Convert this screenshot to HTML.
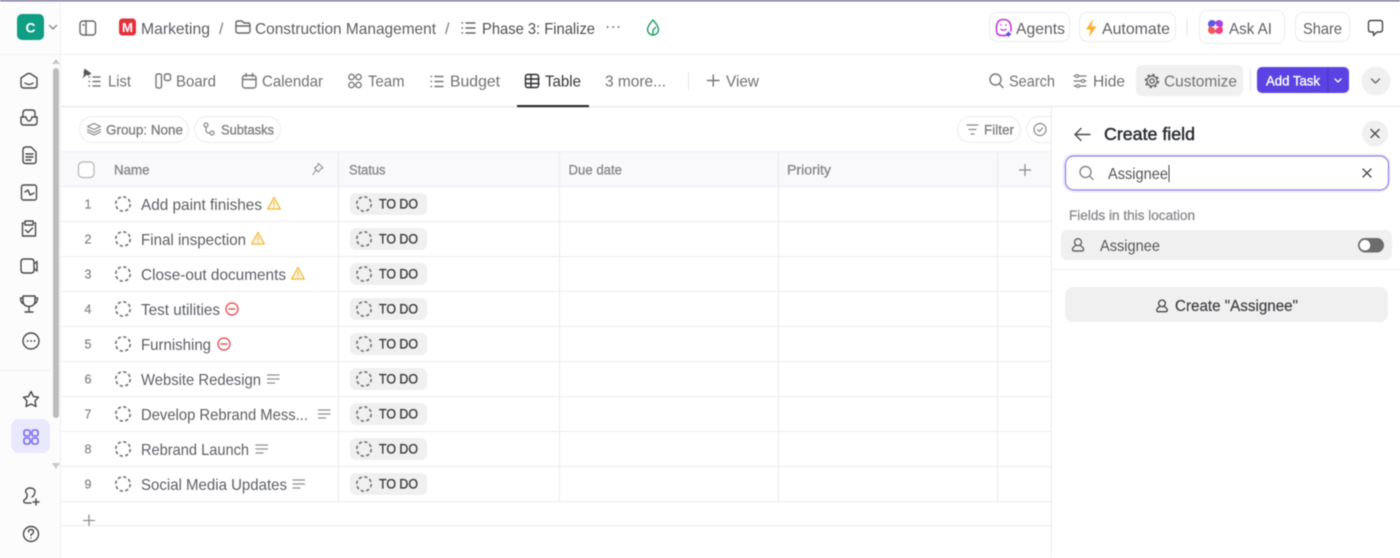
<!DOCTYPE html>
<html lang="en"><head><meta charset="utf-8"><title>Table</title>
<style>
html,body{margin:0;padding:0;background:#fff;width:1400px;height:558px;overflow:hidden}
svg{display:block;filter:blur(.45px)}
text{font-family:"Liberation Sans",sans-serif;font-size:16px;fill:#717171}
.t{fill:#5d5f64;font-size:16px}
.h{fill:#85868a;stroke:#85868a;stroke-width:.3px;font-size:13.5px}
.s{fill:#3a3b3e;stroke:#3a3b3e;stroke-width:.35px;font-size:13.5px}
.n{fill:#8a8a8a;stroke:#8a8a8a;stroke-width:.3px;font-size:12.5px}
.c{fill:#7d7d7d;stroke:#7d7d7d;stroke-width:.3px;font-size:13.5px}
.i{fill:none;stroke:#666;stroke-width:1.4;stroke-linecap:round;stroke-linejoin:round}
.d{fill:none;stroke:#4a4a4d;stroke-width:1.4;stroke-linecap:round;stroke-linejoin:round}
.chip{fill:#fff;stroke:#ececec}
.g{stroke:#ededed;stroke-width:1}
</style></head><body>
<svg width="1400" height="558" viewBox="0 0 1400 558" xmlns="http://www.w3.org/2000/svg">
<defs>
<g id="dash"><circle r="7.2" fill="none" stroke="#777" stroke-width="1.7" stroke-dasharray="3.3 2.35"/></g>
<g id="warn"><path d="M0-6.500L6.300 5H-6.300Z" fill="#fff8e8" stroke="#f5c04f" stroke-width="1.400" stroke-linejoin="round"/><path d="M0-2.500V1.200M0 3.200V3.400" stroke="#f5c04f" stroke-width="1.300" stroke-linecap="round"/></g>
<g id="stop"><circle r="6" fill="none" stroke="#e8575b" stroke-width="1.400"/><path d="M-3 0H3" stroke="#e8575b" stroke-width="1.400" stroke-linecap="round"/></g>
<g id="lines"><path d="M0-4H11.500M0 0H11.500M0 4H7" stroke="#8f8f8f" stroke-width="1.300" stroke-linecap="round"/></g>
<g id="pill"><rect x="350" y="-11" width="77" height="22" rx="6" fill="#f0f0f0"/><use href="#dash" x="364"/><text x="379" y="4.700" class="s" textLength="39" lengthAdjust="spacingAndGlyphs">TO DO</text></g>
<g id="user"><circle cx="0" cy="-2.800" r="3.500" class="i"/><path d="M-2-.2C-2 1.500-5.500 1.500-5.500 4.200Q-5.500 6 -4 6H4Q5.500 6 5.500 4.200C5.500 1.500 2 1.500 2-.2" class="i"/></g>
</defs>
<rect width="1400" height="558" fill="#fff"/>
<!-- top strip -->
<rect width="1400" height="1.500" fill="#7d7698"/>
<!-- sidebar -->
<rect x="0" y="1.500" width="60" height="556.500" fill="#fcfcfd"/>
<rect x="60" y="1.500" width="1" height="556.500" fill="#efefef"/>
<rect x="60" y="54" width="1340" height="1" fill="#efefef"/>
<rect x="0" y="54" width="61" height="1" fill="#f3f3f3"/>
<rect x="17" y="14" width="27" height="26" rx="5" fill="#0f9d84"/>
<text x="25.500" y="32.500" textLength="10" lengthAdjust="spacingAndGlyphs" style="fill:#fff;font-size:14px;font-weight:bold">C</text>
<path d="M49.500 25.500L53 29L56.500 25.500" class="i" style="stroke:#888"/>
<path d="M52 64L56 59L60 64Z" fill="#c9c9c9"/>
<rect x="53" y="68" width="6" height="350" rx="3" fill="#bdbdbd"/>
<path d="M52 463H60L56 469Z" fill="#c9c9c9"/>
<path d="M21 78L27 74Q29 73 31 74L37 78V85Q37 88 34 88H24Q21 88 21 85ZM25 83Q29 86 33 83" class="d"/>
<path d="M23 117V113Q23 110 26 110H32Q35 110 35 113V117M21 117H26Q27 121 29 121T32 117H37V122Q37 125 34 125H24Q21 125 21 122Z" class="d"/>
<path d="M23 150Q23 147 26 147H31L36 152V161Q36 163.500 33.500 163.500H26Q23 163.500 23 161ZM26 154H33M26 157H33M26 160H31" class="d"/>
<rect x="21.500" y="185" width="15" height="15" rx="2" class="d"/><path d="M25 192L28 190L30 195L34 193" class="d"/>
<path d="M23.500 223H22.500V236H35.500V223H34.500M25 221H33V225H25ZM25.500 230L28 232.500L32.500 228" class="d"/>
<path d="M21 262Q21 259 24 259H31Q34 259 34 262V270Q34 273 31 273H24Q21 273 21 270ZM34 264L37 261.500V271L34 268.500" class="d"/>
<path d="M23 296H35V301Q35 306 29 306.500Q23 306 23 301ZM23 298H20.500Q20.500 303 24 304M35 298H37.500Q37.500 303 34 304M29 307V311M25 312H33" class="d"/>
<circle cx="31" cy="341" r="8" class="d"/><path d="M27.500 341h.2M31 341h.2M34.500 341h.2" class="d" style="stroke-width:1.800"/>
<rect x="0" y="370" width="50" height="1" fill="#ededed"/>
<path d="M31 391.500L33.500 396.500L38.500 397.200L35 401L36 406.500L31 404L26 406.500L27 401L23.500 397.200L28.500 396.500Z" class="d"/>
<rect x="11" y="419" width="39" height="34" rx="8" fill="#e9e8fd"/>
<g fill="none" stroke="#7a6af0" stroke-width="1.600"><rect x="24" y="430" width="6" height="6" rx="1.800"/><rect x="32" y="430" width="6" height="6" rx="1.800"/><rect x="24" y="438" width="6" height="6" rx="1.800"/><rect x="32" y="438" width="6" height="6" rx="1.800"/></g>
<path d="M24 500Q28 498 27 494Q25 492 26 490Q27 488 30 488Q34 488 35 491Q35 495 32 497M24 500Q23 503 26 503H31M33 502H39M36 499V505" class="d"/>
<circle cx="31" cy="534" r="7.500" class="d"/><path d="M28.500 532Q28.500 529.500 31 529.500T33.500 532Q33.500 533.500 31 534.500V535.500M31 538V538.100" class="d"/>

<!-- breadcrumb -->
<rect x="80" y="21" width="15.500" height="14" rx="3" class="i"/><path d="M86 21V35M83 25H84" class="i"/>
<rect x="119" y="18.500" width="17" height="17" rx="3.500" fill="#e5303c"/>
<text x="122" y="32" textLength="11" lengthAdjust="spacingAndGlyphs" style="fill:#fff;font-size:12.500px;font-weight:bold">M</text>
<text x="141" y="34" class="t" textLength="69" lengthAdjust="spacingAndGlyphs">Marketing</text>
<text x="219" y="34" class="t" style="fill:#777">/</text>
<path d="M236 23Q236 21 238 21H242L244 23H248Q250 23 250 25V31Q250 33 248 33H238Q236 33 236 31ZM236 26H250" class="i"/>
<text x="255" y="34" class="t" textLength="181" lengthAdjust="spacingAndGlyphs">Construction Management</text>
<text x="445" y="34" class="t" style="fill:#777">/</text>
<path d="M462 23h.5M462 28h.5M462 33h.5M466 23H475M466 28H475M466 33H475" class="i"/>
<text x="482" y="34" class="t" textLength="113" lengthAdjust="spacingAndGlyphs" style="fill:#4d4e52">Phase 3: Finalize</text>
<path d="M607.500 27h.2M613 27h.2M618.500 27h.2" class="i" style="stroke-width:1.800"/>
<path d="M653 20Q658.500 26 658.500 29.500A5.500 5.500 0 0 1 647.500 29.500Q647.500 26 653 20ZM653 35V30L656 27" fill="none" stroke="#1f9d63" stroke-width="1.400" stroke-linejoin="round"/>

<!-- top right -->
<rect x="989.500" y="12.500" width="80" height="29" rx="8" class="chip"/>
<rect x="1079.500" y="12.500" width="96" height="29" rx="8" class="chip"/>
<rect x="1199.500" y="10.500" width="85" height="33" rx="8" class="chip"/>
<rect x="1295.500" y="12.500" width="54" height="29" rx="8" class="chip"/>
<rect x="1186.500" y="19" width="1" height="17" fill="#e5e5e5"/>
<path d="M1010 34Q1003 37 998 34.500Q996 32 996.500 27Q997 19.500 1003.500 19.500Q1010 19.500 1011 26.500V31" fill="none" stroke="#c438d8" stroke-width="1.600" stroke-linecap="round"/>
<path d="M1001 25h.1M1006 25h.1" stroke="#c438d8" stroke-width="1.600" stroke-linecap="round"/><path d="M1000.500 29Q1003.500 31.500 1006.500 29" fill="none" stroke="#c438d8" stroke-width="1.300"/>
<path d="M1008.500 31l1.200 2 2 1.200-2 1.200-1.200 2-1.200-2-2-1.200 2-1.200z" fill="#6a48e8"/>
<text x="1016" y="34" class="t" textLength="49" lengthAdjust="spacingAndGlyphs">Agents</text>
<path d="M1093 19L1086 29.500H1090.500L1089 37L1096.500 26.500H1091.500Z" fill="#fbb02b"/>
<text x="1102" y="34" class="t" textLength="68" lengthAdjust="spacingAndGlyphs">Automate</text>
<circle cx="1212" cy="24" r="4" fill="#5b57e8"/><circle cx="1219" cy="24" r="4" fill="#a243dd"/><circle cx="1212" cy="30" r="4" fill="#f05a5a"/><circle cx="1219" cy="30" r="4" fill="#ef3f86"/><path d="M1215.500 23.500L1216.800 26L1219.500 27L1216.800 28L1215.500 30.500L1214.200 28L1211.500 27L1214.200 26Z" fill="#f9eef7"/>
<text x="1229" y="34" class="t" textLength="43" lengthAdjust="spacingAndGlyphs">Ask AI</text>
<text x="1303" y="34" class="t" textLength="39" lengthAdjust="spacingAndGlyphs">Share</text>
<path d="M1368.500 23Q1368.500 20.500 1371 20.500H1380Q1382.500 20.500 1382.500 23V29.500Q1382.500 32 1380 32H1377L1373.500 35.500V32H1371Q1368.500 32 1368.500 29.500Z" class="d"/>

<!-- tabs -->
<path d="M84.500 68.500L91.500 73.500L88.500 75.500L86.500 75L82.500 78.500L84 74.500L83.500 72.500Z" fill="#55565a"/>
<path d="M89 77h.5M89 81.500h.5M89 86h.5M93 77H100M93 81.500H100M93 86H100" class="i" style="stroke:#777"/>
<text x="108" y="86.500" textLength="23" lengthAdjust="spacingAndGlyphs">List</text>
<rect x="156" y="74" width="5.500" height="14" rx="1.800" class="i" style="stroke:#777"/><rect x="164.500" y="74" width="6" height="6.500" rx="1.800" class="i" style="stroke:#777"/>
<text x="176" y="86.500" textLength="40" lengthAdjust="spacingAndGlyphs">Board</text>
<rect x="242.500" y="75.500" width="13.500" height="12.500" rx="2.500" class="i" style="stroke:#777"/><path d="M243 79.500H256M246 73.500V76.500M252.500 73.500V76.500" class="i" style="stroke:#777"/>
<text x="262" y="86.500" textLength="61" lengthAdjust="spacingAndGlyphs">Calendar</text>
<g class="i" style="stroke:#777"><circle cx="351.500" cy="77" r="2.700"/><circle cx="358.500" cy="77" r="2.700"/><circle cx="351.500" cy="85" r="2.700"/><circle cx="358.500" cy="85" r="2.700"/></g>
<text x="368" y="86.500" textLength="36.500" lengthAdjust="spacingAndGlyphs">Team</text>
<path d="M431 76.500h.5M431 81.500h.5M431 86.500h.5M435 76.500H443M435 81.500H443M435 86.500H443" class="i" style="stroke:#777"/>
<text x="450" y="86.500" textLength="50" lengthAdjust="spacingAndGlyphs">Budget</text>
<rect x="525.500" y="74.500" width="13" height="13" rx="2" class="d" style="stroke:#2a2c30"/><path d="M526 79H539M526 83.500H539M531 75V87" class="d" style="stroke:#2a2c30"/>
<text x="545" y="86.500" textLength="36" lengthAdjust="spacingAndGlyphs" style="fill:#34363a">Table</text>
<text x="605" y="86.500" textLength="61" lengthAdjust="spacingAndGlyphs">3 more...</text>
<rect x="688" y="72" width="1" height="18" fill="#e6e6e6"/>
<path d="M707.500 80.500H719M713.200 75V86" class="i" style="stroke:#777"/>
<text x="726" y="86.500" textLength="33" lengthAdjust="spacingAndGlyphs">View</text>
<circle cx="995.500" cy="79.500" r="5.500" class="i" style="stroke:#777"/><path d="M999.500 84L1003 87.500" class="i" style="stroke:#777"/>
<text x="1009" y="86.500" textLength="46" lengthAdjust="spacingAndGlyphs">Search</text>
<path d="M1074 76H1086M1074 81H1086M1074 86H1086" class="i" style="stroke:#777;stroke-width:1.200"/><circle cx="1077" cy="76" r="1.500" fill="#fff" stroke="#777"/><circle cx="1083" cy="81" r="1.500" fill="#fff" stroke="#777"/><circle cx="1078" cy="86" r="1.500" fill="#fff" stroke="#777"/>
<text x="1093" y="86.500" textLength="32" lengthAdjust="spacingAndGlyphs">Hide</text>
<rect x="1136" y="65" width="107" height="31" rx="6" fill="#f0f0f0"/>
<circle cx="1152" cy="81" r="2.200" class="i"/><circle cx="1152" cy="81" r="5" fill="none" stroke="#666" stroke-width="1.200"/><circle cx="1152" cy="81" r="6.400" fill="none" stroke="#666" stroke-width="1.600" stroke-dasharray="2.500 2.530"/>
<text x="1164" y="86.500" textLength="73" lengthAdjust="spacingAndGlyphs">Customize</text>
<rect x="1250" y="69" width="1" height="22" fill="#e6e6e6"/>
<rect x="1257" y="67" width="92" height="26" rx="5" fill="#5b43e3"/>
<rect x="1327.500" y="67" width="1" height="26" fill="#4a34c4"/>
<text x="1266" y="85.500" textLength="54" lengthAdjust="spacingAndGlyphs" style="fill:#fff;stroke:#fff;stroke-width:.35px;font-size:14px">Add Task</text>
<path d="M1335 79L1338 82L1341 79" fill="none" stroke="#fff" stroke-width="1.300" stroke-linecap="round"/>
<circle cx="1376" cy="81" r="14.500" fill="#f0f0f0"/>
<path d="M1371.500 79L1375.500 83L1379.500 79" class="i"/>
<rect x="61" y="106" width="990" height="1.300" fill="#e6e6e6"/>
<rect x="1051" y="106" width="349" height="1.300" fill="#e6e6e6"/>
<rect x="517" y="105" width="72" height="2.200" fill="#2a2e34"/>

<!-- chips row -->
<rect x="79.500" y="116.500" width="109" height="26" rx="13" class="chip"/>
<rect x="194.500" y="116.500" width="86" height="26" rx="13" class="chip"/>
<rect x="957.500" y="116.500" width="63" height="26" rx="13" class="chip"/>
<rect x="1026.500" y="116.500" width="50" height="26" rx="13" class="chip"/>
<path d="M94 123.500L100.500 126.500L94 129.500L87.500 126.500ZM87.500 129.500L94 132.500L100.500 129.500M87.500 132L94 135L100.500 132" class="i" style="stroke:#888;stroke-width:1.200"/>
<text x="106" y="134.500" class="c" textLength="77" lengthAdjust="spacingAndGlyphs">Group: None</text>
<circle cx="206" cy="125" r="2" class="i" style="stroke:#888;stroke-width:1.200"/><circle cx="212" cy="133" r="2" class="i" style="stroke:#888;stroke-width:1.200"/><path d="M206 127V130Q206 133 209 133H210" class="i" style="stroke:#888;stroke-width:1.200"/>
<text x="221" y="134.500" class="c" textLength="53" lengthAdjust="spacingAndGlyphs">Subtasks</text>
<path d="M967 125H978M969 129.500H976M971 134H974" class="i" style="stroke:#888;stroke-width:1.200"/>
<text x="984" y="134.500" class="c" textLength="30" lengthAdjust="spacingAndGlyphs">Filter</text>
<circle cx="1040" cy="129.500" r="6" class="i" style="stroke:#888;stroke-width:1.200"/><path d="M1037.500 129.500L1039.500 131.500L1042.500 128" class="i" style="stroke:#888;stroke-width:1.200"/>

<!-- table -->
<rect x="61" y="151" width="990" height="35" fill="#f9f9fb"/>
<g class="g"><path d="M61 151.500H1051M61 186.500H1051M61 221.500H1051M61 256.500H1051M61 291.500H1051M61 326.500H1051M61 361.500H1051M61 396.500H1051M61 431.500H1051M61 466.500H1051"/></g>
<path d="M61 501.500H1051M61 525.500H1051" stroke="#ebebeb"/>
<path d="M338.500 151V501M559.500 151V501M778.500 151V501M997.500 151V501" stroke="#eeeeee" stroke-width="1.200"/>
<rect x="78.500" y="162" width="15.500" height="15.500" rx="4" fill="#fff" stroke="#b5b5b5" stroke-width="1.200"/>
<text x="114" y="174.500" class="h" textLength="35.500" lengthAdjust="spacingAndGlyphs">Name</text>
<path d="M318.500 163.500L323 168L320.500 169L318.500 172L314.500 168L317.500 166ZM316 170L313 174.500" class="i" style="stroke:#8f8f8f;stroke-width:1.100"/>
<text x="349" y="174.500" class="h" textLength="36.500" lengthAdjust="spacingAndGlyphs">Status</text>
<text x="568.500" y="174.500" class="h" textLength="53.500" lengthAdjust="spacingAndGlyphs">Due date</text>
<text x="787" y="174.500" class="h" textLength="44" lengthAdjust="spacingAndGlyphs">Priority</text>
<path d="M1019 170H1031M1025 164V176" stroke="#888" stroke-width="1.200"/>

<text x="84.500" y="208.500" class="n">1</text><use href="#dash" x="123" y="204"/><text x="141" y="210" class="t" textLength="121" lengthAdjust="spacingAndGlyphs">Add paint finishes</text><use href="#warn" x="274" y="204"/><use href="#pill" y="204"/>
<text x="84.500" y="243.500" class="n">2</text><use href="#dash" x="123" y="239"/><text x="141" y="245" class="t" textLength="105" lengthAdjust="spacingAndGlyphs">Final inspection</text><use href="#warn" x="258" y="239"/><use href="#pill" y="239"/>
<text x="84.500" y="278.500" class="n">3</text><use href="#dash" x="123" y="274"/><text x="141" y="280" class="t" textLength="145" lengthAdjust="spacingAndGlyphs">Close-out documents</text><use href="#warn" x="298" y="274"/><use href="#pill" y="274"/>
<text x="84.500" y="313.500" class="n">4</text><use href="#dash" x="123" y="309"/><text x="141" y="315" class="t" textLength="79" lengthAdjust="spacingAndGlyphs">Test utilities</text><use href="#stop" x="232" y="309"/><use href="#pill" y="309"/>
<text x="84.500" y="348.500" class="n">5</text><use href="#dash" x="123" y="344"/><text x="141" y="350" class="t" textLength="70" lengthAdjust="spacingAndGlyphs">Furnishing</text><use href="#stop" x="224" y="344"/><use href="#pill" y="344"/>
<text x="84.500" y="383.500" class="n">6</text><use href="#dash" x="123" y="379"/><text x="141" y="385" class="t" textLength="120" lengthAdjust="spacingAndGlyphs">Website Redesign</text><use href="#lines" x="267.500" y="379"/><use href="#pill" y="379"/>
<text x="84.500" y="418.500" class="n">7</text><use href="#dash" x="123" y="414"/><text x="141" y="420" class="t" textLength="167" lengthAdjust="spacingAndGlyphs">Develop Rebrand Mess...</text><use href="#lines" x="318.500" y="414"/><use href="#pill" y="414"/>
<text x="84.500" y="453.500" class="n">8</text><use href="#dash" x="123" y="449"/><text x="141" y="455" class="t" textLength="108" lengthAdjust="spacingAndGlyphs">Rebrand Launch</text><use href="#lines" x="256" y="449"/><use href="#pill" y="449"/>
<text x="84.500" y="488.500" class="n">9</text><use href="#dash" x="123" y="484"/><text x="141" y="490" class="t" textLength="146" lengthAdjust="spacingAndGlyphs">Social Media Updates</text><use href="#lines" x="293" y="484"/><use href="#pill" y="484"/>
<path d="M83 520.500H95M89 514.500V526" stroke="#8f8f8f" stroke-width="1.300"/>

<!-- panel -->
<rect x="1051" y="107" width="349" height="451" fill="#fff"/>
<rect x="1051" y="107" width="1" height="451" fill="#ececec"/>
<path d="M1075 134.500H1090M1081 128.500L1075 134.500L1081 140.500" class="d"/>
<text x="1104" y="140" textLength="91" lengthAdjust="spacingAndGlyphs" style="fill:#2a2c30;stroke:#2a2c30;stroke-width:.45px;font-size:17.500px">Create field</text>
<circle cx="1375" cy="133.500" r="13" fill="#f0f0f0"/>
<path d="M1371 129.500L1379 137.500M1379 129.500L1371 137.500" class="d"/>
<rect x="1062.500" y="153.500" width="328" height="39" rx="11" fill="#f0eefd"/>
<rect x="1065.500" y="156" width="323" height="34" rx="8.500" fill="#fff" stroke="#8d82e8" stroke-width="1.200"/>
<circle cx="1085.500" cy="172" r="5.500" class="i" style="stroke:#888"/><path d="M1089.500 176L1093 179.500" class="i" style="stroke:#888"/>
<text x="1108" y="179" class="t" textLength="60" lengthAdjust="spacingAndGlyphs" style="fill:#55565a">Assignee</text>
<rect x="1168.500" y="165" width="1" height="17" fill="#444"/>
<path d="M1363 169L1371 177M1371 169L1363 177" class="d"/>
<text x="1069" y="220" textLength="126" lengthAdjust="spacingAndGlyphs" style="fill:#8a8b8f;stroke:#8a8b8f;stroke-width:.3px;font-size:13.500px">Fields in this location</text>
<rect x="1061" y="230" width="331" height="30" rx="6" fill="#f0f0f0"/>
<use href="#user" x="1078" y="245"/>
<text x="1100" y="251" class="t" textLength="60" lengthAdjust="spacingAndGlyphs" style="fill:#55565a">Assignee</text>
<rect x="1358" y="238" width="26" height="14.500" rx="7.200" fill="#6c6c6c"/>
<circle cx="1365" cy="245.200" r="5.300" fill="#fff"/>
<rect x="1052" y="269" width="348" height="1" fill="#eeeeee"/>
<rect x="1065" y="287" width="323" height="35" rx="8" fill="#f0f0f0"/>
<g transform="translate(1162 306) scale(.95)"><circle cx="0" cy="-2.800" r="3.500" class="d"/><path d="M-2-.2C-2 1.500-5.500 1.500-5.500 4.200Q-5.500 6 -4 6H4Q5.500 6 5.500 4.200C5.500 1.500 2 1.500 2-.2" class="d"/></g>
<text x="1175" y="311" textLength="123" lengthAdjust="spacingAndGlyphs" style="fill:#3f4044;stroke:#3f4044;stroke-width:.2px;font-size:15.500px">Create "Assignee"</text>
</svg>
</body></html>
